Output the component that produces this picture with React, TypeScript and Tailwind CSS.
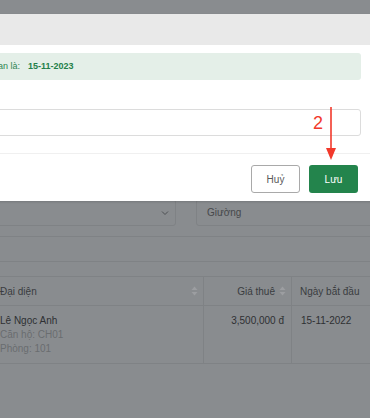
import React from "react";

function SortIcon({ color = "#9c9ea1" }: { color?: string }) {
  return (
    <svg width="7" height="10" viewBox="0 0 7 10" className="shrink-0">
      <path d="M3.5 0.5 L6.5 4 L0.5 4 Z" fill={color} />
      <path d="M3.5 9.5 L6.5 6 L0.5 6 Z" fill={color} />
    </svg>
  );
}

export default function App() {
  return (
    <div className="relative w-[370px] h-[418px] overflow-hidden bg-[#898c8f] font-['Liberation_Sans',Arial,sans-serif]">
      {/* background page (dimmed) */}
      <div className="flex flex-col">
        <div className="h-[199px]" />
        <div className="flex gap-[20px] pb-[10px] border-b border-[#7f8285]">
          <div className="-ml-[10px] w-[186px] h-[27px] rounded-[3px] border border-[#7f8285] flex items-center justify-end pr-[6px]">
            <svg width="8" height="6" viewBox="0 0 8 6">
              <path d="M1 1.5 L4 4.5 L7 1.5" fill="none" stroke="#4d5053" strokeWidth="1" />
            </svg>
          </div>
          <div className="flex-1 -mr-[10px] h-[27px] rounded-[3px] border border-[#7f8285] flex items-center pl-[10px] text-[10px] text-[#46484b]">
            Giường
          </div>
        </div>
        <div className="h-[25px] border-b border-[#7f8285]" />
        <div className="h-[15px] border-b border-[#7f8285]" />
        <div className="-ml-[8px] flex flex-col">
          <div className="flex h-[29px] border-b border-[#7f8285] text-[10px] text-[#3a3c3f]">
            <div className="w-[212px] border-r border-[#7f8285] flex items-center justify-between pl-[8px] pr-[5px]">
              <span>Đại diện</span>
              <SortIcon />
            </div>
            <div className="w-[88px] border-r border-[#7f8285] flex items-center justify-end gap-[4px] pr-[5px]">
              <span>Giá thuê</span>
              <SortIcon />
            </div>
            <div className="flex-1 flex items-center pl-[8px] whitespace-nowrap">Ngày bắt đầu</div>
          </div>
          <div className="flex h-[58px] border-b border-[#7f8285] text-[10px] leading-[14px]">
            <div className="w-[212px] border-r border-[#7f8285] pl-[8px] pt-[8px] flex flex-col">
              <span className="text-[#2e3033]">Lê Ngọc Anh</span>
              <span className="text-[#6a6d70]">Căn hộ: CH01</span>
              <span className="text-[#6a6d70]">Phòng: 101</span>
            </div>
            <div className="w-[88px] border-r border-[#7f8285] pt-[8px] pr-[7px] text-right text-[#2e3033]">
              3,500,000 đ
            </div>
            <div className="flex-1 pt-[8px] pl-[9px] text-[#2e3033]">15-11-2022</div>
          </div>
        </div>
      </div>

      {/* modal */}
      <div className="absolute top-[14px] left-[-54px] right-[-6px] bg-white flex flex-col shadow-[0_1px_2px_rgba(0,0,0,0.15)]">
        <div className="h-[31px] bg-[#e9e9e9]" />
        <div className="px-[15px] pt-[8px] pb-[17px] flex flex-col">
          <div className="h-[27px] rounded-[3px] bg-[#e4efe8] flex items-center pl-[9px] text-[9px] text-[#2f8552] whitespace-nowrap">
            <span>Thời gian là:</span>
            <span className="ml-[8px] font-bold text-[#23804a]">15-11-2023</span>
          </div>
          <div className="mt-[29px] h-[27px] rounded-[3px] border border-[#dcdcdc] bg-white" />
        </div>
        <div className="border-t border-[#f0f0f0] pl-[15px] pr-[18px] pt-[11px] pb-[8px] flex justify-end gap-[9px]">
          <button className="w-[49px] h-[28px] rounded-[3px] border border-[#a9a9a9] bg-white text-[10px] text-[#5a5a5a] flex items-center justify-center">
            Huỷ
          </button>
          <button className="w-[49px] h-[28px] rounded-[3px] bg-[#23844c] text-[10px] text-white flex items-center justify-center">
            Lưu
          </button>
        </div>
      </div>

      {/* annotation */}
      <div className="absolute left-[313px] top-[112px] text-[18px] leading-[22px] text-[#f2392b]">2</div>
      <svg className="absolute left-0 top-0 pointer-events-none" width="370" height="418">
        <line x1="331" y1="107" x2="331" y2="150" stroke="#f2392b" strokeWidth="1.6" />
        <polygon points="326,148 336,148 331,160" fill="#f2392b" />
      </svg>
    </div>
  );
}
